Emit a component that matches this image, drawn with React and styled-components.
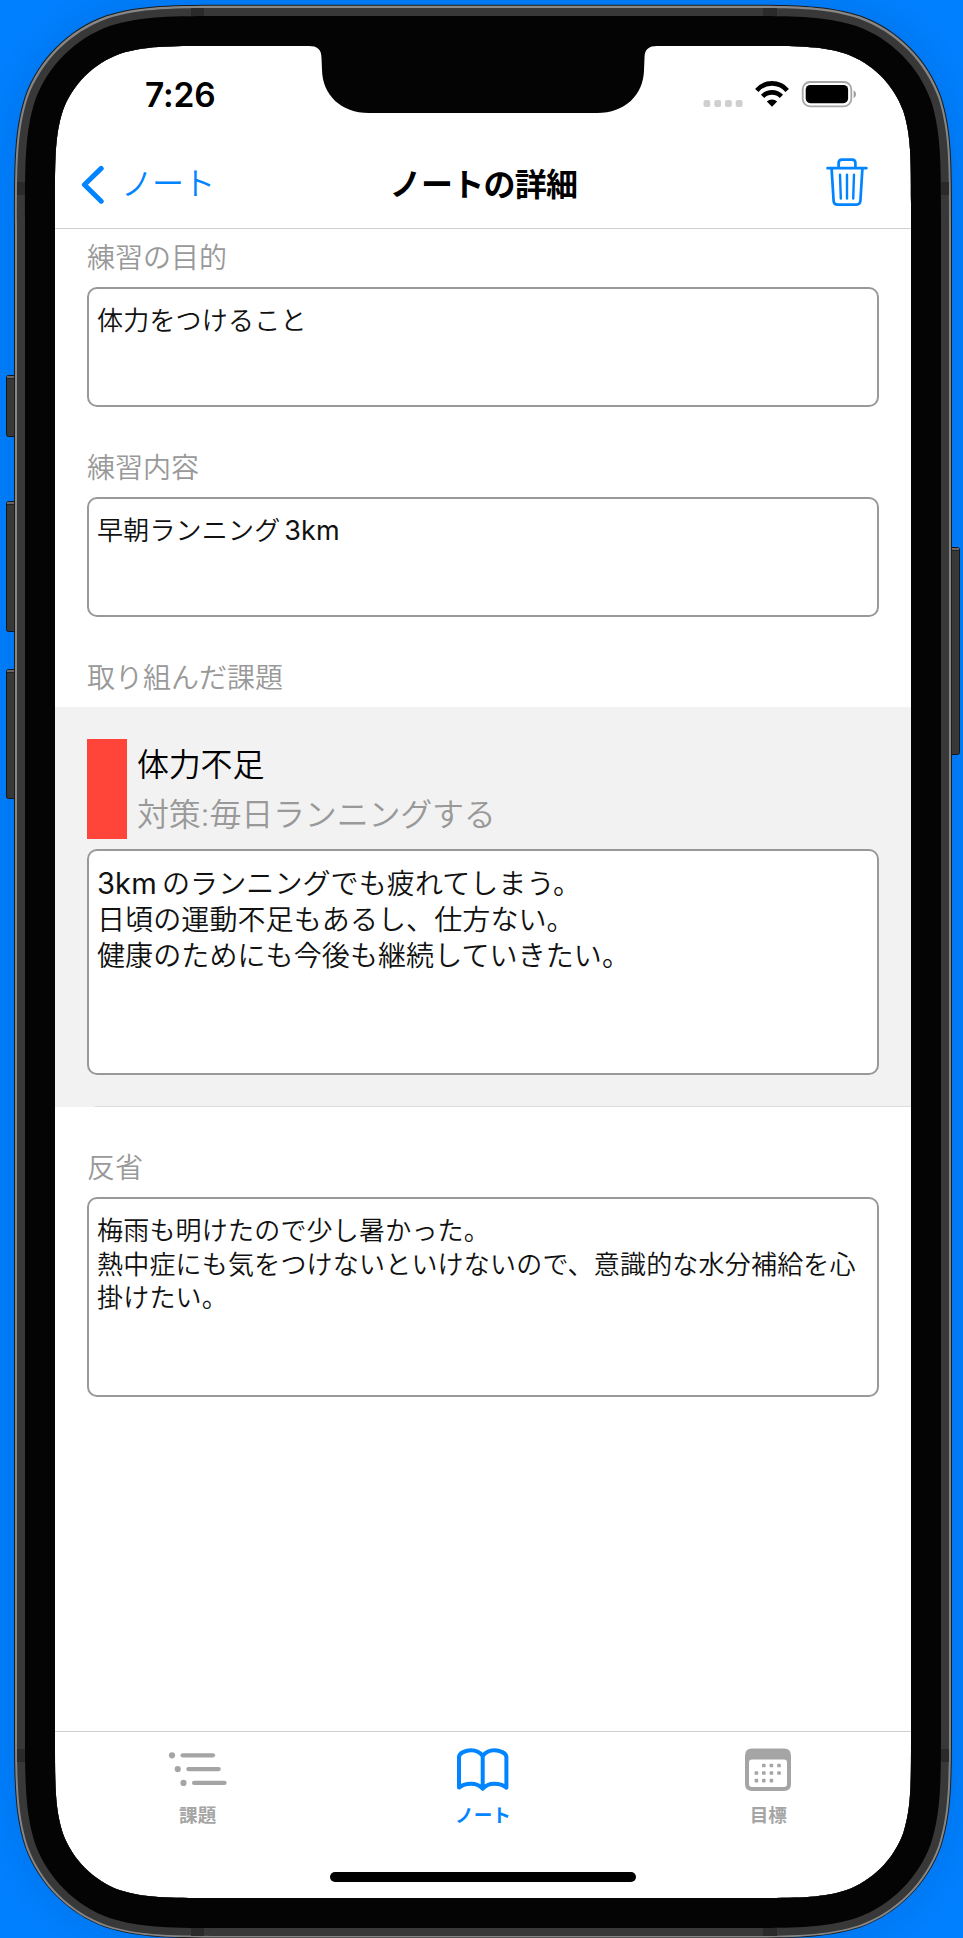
import React from "react";
import styled, { createGlobalStyle } from "styled-components";

const GlobalStyle = createGlobalStyle`
  *, *::before, *::after { box-sizing: border-box; }
  body {
    margin: 0;
    background: #007ffb;
    font-family: Inter, "Noto Sans CJK JP", sans-serif;
    color: #000;
  }
`;

const Stage = styled.div`
  position: relative;
  width: 963px;
  height: 1938px;
  overflow: hidden;
  padding: 46px 52px 40px 55px;
  background: #0080ff;
`;

const Shell = styled.svg`
  position: absolute;
  inset: 0;
  pointer-events: none;
  z-index: ${(p) => (p.$front ? 1 : 0)};
`;

const Screen = styled.main`
  position: relative;
  display: flex;
  flex-direction: column;
  width: 856px;
  height: 1852px;
  border-radius: 80px;
  background: #fff;
`;

const StatusBar = styled.header`
  display: flex;
  justify-content: space-between;
  align-items: center;
  height: 96px;
  padding: 0 54px 0 90px;
`;

const Time = styled.span`
  padding-top: 1px;
  font-size: 33.5px;
  font-weight: 600;
  line-height: 40px;
  letter-spacing: -0.2px;
`;

const NavBar = styled.nav`
  display: grid;
  grid-template-columns: 1fr auto 1fr;
  align-items: center;
  height: 87px;
  padding: 0 26px 2px;
  border-bottom: 1px solid #cfcfcf;
`;

const BackButton = styled.a`
  display: flex;
  align-items: center;
  gap: 16px;
  color: #0084ff;
  font-size: 32px;
  font-weight: 350;
  line-height: 40px;
  letter-spacing: -0.9px;
`;

const Title = styled.h1`
  margin: 0;
  padding: 1px 0 0 1px;
  font-size: 32px;
  font-weight: 600;
  line-height: 40px;
  letter-spacing: -0.7px;
`;

const Trash = styled.div`
  display: flex;
  justify-content: flex-end;
  padding: 0 17px 4px 0;
`;

const Content = styled.div`
  flex: 1;
  display: flex;
  flex-direction: column;
`;

const Field = styled.section`
  display: flex;
  flex-direction: column;
  padding: ${(p) => p.$top}px 32px 0;
`;

const Label = styled.h2`
  margin: 0;
  height: 40px;
  font-size: 28px;
  font-weight: 350;
  line-height: 40px;
  color: #999;
`;

const TextBox = styled.div`
  height: ${(p) => p.$height}px;
  margin-top: ${(p) => p.$gap ?? 9}px;
  padding: 15px 8px;
  border: 2px solid #999;
  border-radius: 10px;
  background: #fff;
  color: #111;
  font-size: ${(p) => (p.$large ? 28 : 26)}px;
  font-weight: 350;
  line-height: ${(p) => (p.$large ? 36 : 33.7)}px;
  letter-spacing: ${(p) => (p.$large ? 0.1 : 0.2)}px;
`;

const Line = styled.p`
  margin: 0;
`;

const Latin = styled.span`
  margin: ${(p) => (p.$leading ? "0 0.18em 0 0" : "0 0 0 0.14em")};
  font-size: 1.04em;
  font-weight: 400;
  line-height: 1;
`;

const TaskCell = styled.section`
  position: relative;
  height: 400px;
  margin-top: 9px;
  padding: 32px;
  background: #f2f2f2;

  &::after {
    content: "";
    position: absolute;
    right: 0;
    bottom: 0;
    left: 40px;
    height: 1px;
    background: #dcdcdc;
  }
`;

const TaskHead = styled.div`
  display: flex;
  gap: 10px;
  height: 100px;
`;

const Swatch = styled.div`
  width: 40px;
  background: #ff453a;
`;

const TaskText = styled.div`
  display: grid;
  grid-template-rows: 50px 50px;
  padding-top: 1px;
  font-size: 32px;
  font-weight: 350;
  line-height: 50px;
  letter-spacing: -0.2px;
`;

const Measure = styled.span`
  color: #999;
`;

const TabBar = styled.footer`
  display: grid;
  grid-template-columns: repeat(3, 1fr);
  height: 167px;
  padding-top: 14px;
  border-top: 1px solid #cfcfcf;
`;

const Tab = styled.div`
  display: flex;
  flex-direction: column;
  align-items: center;
  gap: 12px;
  color: ${(p) => (p.$active ? "#0084ff" : "#a5a5a5")};
  font-size: 18.6px;
  font-weight: 600;
  line-height: 22px;
`;

const HomeIndicator = styled.div`
  position: absolute;
  bottom: 16px;
  left: 275px;
  width: 306px;
  height: 10px;
  border-radius: 5px;
  background: #000;
`;

/* Rounded rectangle with continuous-curvature corners. */
function squircle(x0, y0, x1, y1, r) {
  const a = 1.52866 * r, b = 1.08849 * r, c = 0.86841 * r;
  const d = 0.63149 * r, e = 0.07491 * r, f = 0.37282 * r, g = 0.16906 * r;
  return [
    `M${x0 + a} ${y0}H${x1 - a}`,
    `C${x1 - b} ${y0} ${x1 - c} ${y0} ${x1 - d} ${y0 + e}`,
    `C${x1 - f} ${y0 + g} ${x1 - g} ${y0 + f} ${x1 - e} ${y0 + d}`,
    `C${x1} ${y0 + c} ${x1} ${y0 + b} ${x1} ${y0 + a}`,
    `V${y1 - a}`,
    `C${x1} ${y1 - b} ${x1} ${y1 - c} ${x1 - e} ${y1 - d}`,
    `C${x1 - g} ${y1 - f} ${x1 - f} ${y1 - g} ${x1 - d} ${y1 - e}`,
    `C${x1 - c} ${y1} ${x1 - b} ${y1} ${x1 - a} ${y1}`,
    `H${x0 + a}`,
    `C${x0 + b} ${y1} ${x0 + c} ${y1} ${x0 + d} ${y1 - e}`,
    `C${x0 + f} ${y1 - g} ${x0 + g} ${y1 - f} ${x0 + e} ${y1 - d}`,
    `C${x0} ${y1 - c} ${x0} ${y1 - b} ${x0} ${y1 - a}`,
    `V${y0 + a}`,
    `C${x0} ${y0 + b} ${x0} ${y0 + c} ${x0 + e} ${y0 + d}`,
    `C${x0 + g} ${y0 + f} ${x0 + f} ${y0 + g} ${x0 + d} ${y0 + e}`,
    `C${x0 + c} ${y0} ${x0 + b} ${y0} ${x0 + a} ${y0}Z`,
  ].join("");
}

const HOLE = squircle(55, 46, 911, 1898, 103);
const ring = (x0, y0, x1, y1, r) => squircle(x0, y0, x1, y1, r) + HOLE;

const SIDE_BUTTONS = [
  { x: 6, y: 375, h: 62 },
  { x: 6, y: 501, h: 131 },
  { x: 6, y: 669, h: 130 },
  { x: 948, y: 547, h: 208 },
];

const BANDS = [
  [191, 8, 13, 8], [763, 8, 14, 8], [191, 1928, 13, 8], [763, 1928, 14, 8],
  [17, 182, 8, 13], [941, 182, 8, 13], [17, 1749, 8, 13], [941, 1749, 8, 13],
];

function DeviceBack() {
  return (
    <Shell width="963" height="1938">
      <defs>
        <filter id="soft" x="-10%" y="-10%" width="120%" height="120%">
          <feGaussianBlur stdDeviation="22" />
        </filter>
      </defs>
      <path d={squircle(14, 5, 952, 1938, 147)} fill="#00327a" opacity="0.2" filter="url(#soft)" />
      {SIDE_BUTTONS.map((b) => (
        <g key={b.y}>
          <rect x={b.x + 0.5} y={b.y + 0.5} width="11" height={b.h - 1} rx="2" fill="#383838" stroke="#161616" />
          <rect x={b.x + 1} y={b.y + 1} width="10" height="2" fill="#686868" />
          <rect x={b.x + 1} y={b.y + 3} width="10" height="1" fill="#222" />
        </g>
      ))}
    </Shell>
  );
}

function DeviceFront() {
  return (
    <Shell $front width="963" height="1938" fillRule="evenodd">
      <path d={ring(14, 4.7, 952, 1938.3, 145)} fill="#1c1c1c" />
      <path d={ring(15, 5.7, 951, 1937.6, 144)} fill="#868686" />
      <path d={ring(17, 8, 949, 1936, 142.5)} fill="#383838" />
      {BANDS.map(([x, y, w, h]) => (
        <rect key={`${x}-${y}`} x={x} y={y} width={w} height={h} fill="#2a2a2a" />
      ))}
      <path d={ring(25, 16, 941, 1928, 134)} fill="#040404" />
      <path
        d="M309 45V46C317 46 321.5 49 321.5 58L322 70C322.5 95 341 113 369 113H597C625 113 643.5 95 644 70L644.5 58C644.5 49 649 46 657 46V45Z"
        fill="#040404"
      />
    </Shell>
  );
}

function StatusIcons() {
  return (
    <svg width="156" height="30" viewBox="701 79 156 30">
      {[703.5, 714.3, 725, 735.7].map((x) => (
        <rect key={x} x={x} y="100" width="6.8" height="7" rx="2" fill="#cfcfcf" />
      ))}
      <g fill="none" stroke="#000" strokeWidth="4.6">
        <path d="M756.8 90.4A20 20 0 0 1 787.2 90.4" />
        <path d="M762.6 96.4A13 13 0 0 1 781.4 96.4" />
      </g>
      <path d="M772 106.8L766.8 101.6A7.4 7.4 0 0 1 777.2 101.6Z" />
      <rect x="802.7" y="82" width="48.6" height="24.4" rx="7.4" fill="none" stroke="#a6a6a6" strokeWidth="1.8" />
      <rect x="805.7" y="85" width="42.4" height="18.2" rx="4.6" />
      <path d="M853.6 90.5C856.8 91.6 856.8 96.8 853.6 98Z" fill="#a0a0a0" />
    </svg>
  );
}

function ChevronIcon() {
  return (
    <svg width="24" height="40" viewBox="81 163 24 40" fill="none" stroke="#0084ff" strokeWidth="5" strokeLinecap="round" strokeLinejoin="round">
      <path d="M101.2 167.4L84.4 183.8L101.2 200.2" />
    </svg>
  );
}

function TrashIcon() {
  return (
    <svg width="42" height="50" viewBox="826 157 42 50" fill="none" stroke="#0084ff" strokeWidth="2.7" strokeLinecap="round" strokeLinejoin="round">
      <path d="M827.6 168.2H866.4M838.6 168V163Q838.6 159.6 842 159.6H852Q855.4 159.6 855.4 163V168" />
      <path d="M831.6 168.6L833.6 200.8Q833.8 204.6 837.6 204.6H856.4Q860.2 204.6 860.4 200.8L862.4 168.6" />
      <path d="M840 174.6L840.8 198.6M847 174.6V198.6M854 174.6L853.2 198.6" strokeWidth="2.4" />
    </svg>
  );
}

function ListIcon() {
  return (
    <svg width="60" height="46" viewBox="168 1746 60 46" fill="currentColor">
      {[0, 1, 2].map((i) => (
        <g key={i} transform={`translate(${i * 5.75} ${i * 13.8})`}>
          <circle cx="172" cy="1755.3" r="3.1" />
          <rect x="180.5" y="1753.2" width="34.6" height="4.2" rx="2.1" />
        </g>
      ))}
    </svg>
  );
}

function BookIcon() {
  return (
    <svg width="60" height="46" viewBox="453 1746 60 46" fill="none" stroke="currentColor" strokeWidth="4" strokeLinejoin="round" strokeLinecap="round">
      <path d="M482.7 1756C480 1752.2 475.6 1750.3 471 1750.3C466 1750.3 459 1752.8 459 1757V1787.6C462.4 1785 466 1783.8 471 1783.8C475.6 1783.8 479.8 1785.4 482.7 1788.8C485.6 1785.4 489.8 1783.8 494.4 1783.8C499.4 1783.8 503 1785 506.4 1787.6V1757C506.4 1752.8 499.4 1750.3 494.4 1750.3C489.8 1750.3 485.4 1752.2 482.7 1756V1788" />
    </svg>
  );
}

function CalendarIcon() {
  const dots = [
    [763.8, 1765.5], [771.4, 1765.5], [779, 1765.5],
    [756.4, 1773], [763.8, 1773], [771.4, 1773], [779, 1773],
    [756.4, 1780.6], [763.8, 1780.6], [771.4, 1780.6],
  ];
  return (
    <svg width="60" height="46" viewBox="738 1746 60 46" fill="currentColor">
      <path
        fillRule="evenodd"
        d="M752 1748.6H784Q791 1748.6 791 1755.6V1784Q791 1791 784 1791H752Q745 1791 745 1784V1755.6Q745 1748.6 752 1748.6ZM752 1759.4Q749 1759.4 749 1762.4V1784Q749 1787 752 1787H784Q787 1787 787 1784V1762.4Q787 1759.4 784 1759.4Z"
      />
      {dots.map(([x, y]) => (
        <rect key={`${x}-${y}`} x={x - 1.8} y={y - 1.8} width="3.6" height="3.6" rx="0.9" />
      ))}
    </svg>
  );
}

export default function App() {
  return (
    <Stage>
      <GlobalStyle />
      <DeviceBack />
      <Screen>
        <StatusBar>
          <Time>7:26</Time>
          <StatusIcons />
        </StatusBar>
        <NavBar>
          <BackButton><ChevronIcon />ノート</BackButton>
          <Title>ノートの詳細</Title>
          <Trash><TrashIcon /></Trash>
        </NavBar>
        <Content>
          <Field $top={9}>
            <Label>練習の目的</Label>
            <TextBox $height={120}><Line>体力をつけること</Line></TextBox>
          </Field>
          <Field $top={41}>
            <Label>練習内容</Label>
            <TextBox $height={120}><Line>早朝ランニング<Latin>3km</Latin></Line></TextBox>
          </Field>
          <Field $top={41}>
            <Label>取り組んだ課題</Label>
          </Field>
          <TaskCell>
            <TaskHead>
              <Swatch />
              <TaskText>
                <span>体力不足</span>
                <Measure>対策:毎日ランニングする</Measure>
              </TaskText>
            </TaskHead>
            <TextBox $large $height={226} $gap={10}>
              <Line><Latin $leading>3km</Latin>のランニングでも疲れてしまう。</Line>
              <Line>日頃の運動不足もあるし、仕方ない。</Line>
              <Line>健康のためにも今後も継続していきたい。</Line>
            </TextBox>
          </TaskCell>
          <Field $top={41}>
            <Label>反省</Label>
            <TextBox $height={200}>
              <Line>梅雨も明けたので少し暑かった。</Line>
              <Line>熱中症にも気をつけないといけないので、意識的な水分補給を心掛けたい。</Line>
            </TextBox>
          </Field>
        </Content>
        <TabBar>
          <Tab><ListIcon />課題</Tab>
          <Tab $active><BookIcon />ノート</Tab>
          <Tab><CalendarIcon />目標</Tab>
        </TabBar>
        <HomeIndicator />
      </Screen>
      <DeviceFront />
    </Stage>
  );
}
